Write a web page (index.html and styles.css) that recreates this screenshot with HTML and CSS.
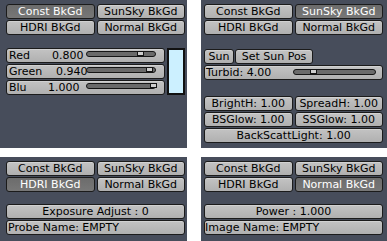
FILE: index.html
```html
<!DOCTYPE html>
<html>
<head>
<meta charset="utf-8">
<link rel="stylesheet" href="styles.css">
</head>
<body>
<main class="grid">
  <section class="panel left">
    <div class="pair"><div class="btn active">Const BkGd</div><div class="btn">SunSky BkGd</div></div>
    <div class="pair"><div class="btn">HDRI BkGd</div><div class="btn">Normal BkGd</div></div>
    <div class="rgb">
      <div class="sliders">
        <div class="btn slider">
          <div class="txt"><span class="lbl w-red">Red</span><span class="val">0.800</span></div>
          <div class="track"><span class="knob" style="left:50px"></span></div>
        </div>
        <div class="btn slider">
          <div class="txt"><span class="lbl w-green">Green</span><span class="val">0.940</span></div>
          <div class="track"><span class="knob" style="left:59px"></span></div>
        </div>
        <div class="btn slider">
          <div class="txt"><span class="lbl w-blu">Blu</span><span class="val">1.000</span></div>
          <div class="track"><span class="knob" style="left:63px"></span></div>
        </div>
      </div>
      <div class="swatch"></div>
    </div>
  </section>

  <section class="panel right">
    <div class="pair"><div class="btn">Const BkGd</div><div class="btn active">SunSky BkGd</div></div>
    <div class="pair"><div class="btn">HDRI BkGd</div><div class="btn">Normal BkGd</div></div>
    <div class="sunrow"><div class="btn sun">Sun</div><div class="btn setsun">Set Sun Pos</div></div>
    <div class="btn slider turbid">
      <div class="ttxt">Turbid: 4.00</div>
      <div class="track ttrack"><span class="knob" style="left:16px"></span></div>
    </div>
    <div class="pair gap-top"><div class="btn">BrightH: 1.00</div><div class="btn">SpreadH: 1.00</div></div>
    <div class="pair"><div class="btn">BSGlow: 1.00</div><div class="btn">SSGlow: 1.00</div></div>
    <div class="btn wide">BackScattLight: 1.00</div>
  </section>

  <section class="panel left bottom">
    <div class="pair"><div class="btn">Const BkGd</div><div class="btn">SunSky BkGd</div></div>
    <div class="pair"><div class="btn active">HDRI BkGd</div><div class="btn">Normal BkGd</div></div>
    <div class="btn wide mid">Exposure Adjust : 0</div>
    <div class="btn wide name probe">Probe Name: EMPTY</div>
  </section>

  <section class="panel right bottom">
    <div class="pair"><div class="btn">Const BkGd</div><div class="btn">SunSky BkGd</div></div>
    <div class="pair"><div class="btn">HDRI BkGd</div><div class="btn active">Normal BkGd</div></div>
    <div class="btn wide mid">Power : 1.000</div>
    <div class="btn wide name image">Image Name: EMPTY</div>
  </section>
</main>
</body>
</html>
```

FILE: styles.css
```css
* { box-sizing: border-box; }
html, body { margin: 0; padding: 0; background: #ffffff; }
body {
  font-family: "DejaVu Sans", "Liberation Sans", sans-serif;
  font-size: 11px;
  color: #000;
}
.grid {
  display: grid;
  grid-template-columns: 187px 186px;
  grid-template-rows: 148px 84px;
  column-gap: 14px;
  row-gap: 9px;
  width: 387px;
  height: 241px;
}
.panel {
  background: #474d5b;
  display: flex;
  flex-direction: column;
  padding-top: 4px;
}
.panel.left { padding-left: 6px; padding-right: 2px; }
.panel.right { padding-left: 3px; padding-right: 4px; }

.btn {
  height: 15px;
  border: 1px solid #1b1b1b;
  border-radius: 3px;
  background: linear-gradient(#c3c3c3, #b0b0b0);
  box-shadow: inset 0 1px 0 rgba(255,255,255,0.25);
  line-height: 12px;
  padding-top: 1px;
  text-align: center;
  white-space: nowrap;
  overflow: hidden;
}
.btn.active {
  background: linear-gradient(#6c6c6c, #777777);
  color: #fff;
  box-shadow: none;
}
.pair {
  display: grid;
  grid-template-columns: 1fr 1fr;
  column-gap: 2px;
  margin-bottom: 1px;
}
.rgb {
  display: flex;
  gap: 2px;
  margin-top: 12px;
}
.sliders {
  width: 159px;
  display: flex;
  flex-direction: column;
  gap: 1px;
}
.slider {
  display: flex;
  align-items: flex-start;
  text-align: left;
  overflow: visible;
}
.txt {
  width: 79px;
  padding-left: 2px;
  flex: none;
}
.lbl { display: inline-block; }
.w-red { width: 43px; }
.w-green { width: 47px; }
.w-blu { width: 39px; }
.track {
  position: relative;
  width: 70px;
  height: 6px;
  margin-top: 1px;
  border: 1px solid #151515;
  border-radius: 3px;
  background: #6a6a6a;
  flex: none;
}
.knob {
  position: absolute;
  top: -1px;
  width: 7px;
  height: 5px;
  border: 1px solid #151515;
  background: #cfcfcf;
}
.swatch {
  flex: 1;
  border: 2px solid #111;
  background: rgb(204, 240, 255);
}
.sunrow {
  display: flex;
  gap: 1px;
  margin-top: 13px;
  margin-bottom: 1px;
}
.sun { width: 30px; }
.setsun { width: 78px; }
.turbid { padding-left: 0; }
.ttxt { padding-left: 1px; }
.ttrack {
  width: 83px;
  margin-left: auto;
  margin-right: 6px;
  margin-top: 2px;
}
.gap-top { margin-top: 16px; }
.wide { width: 100%; margin-bottom: 1px; }
.mid { margin-top: 11px; }
.bottom .mid { margin-top: 11px; }
.name { text-align: left; }
.probe { padding-left: 1px; }
.image { padding-left: 0; }
```
